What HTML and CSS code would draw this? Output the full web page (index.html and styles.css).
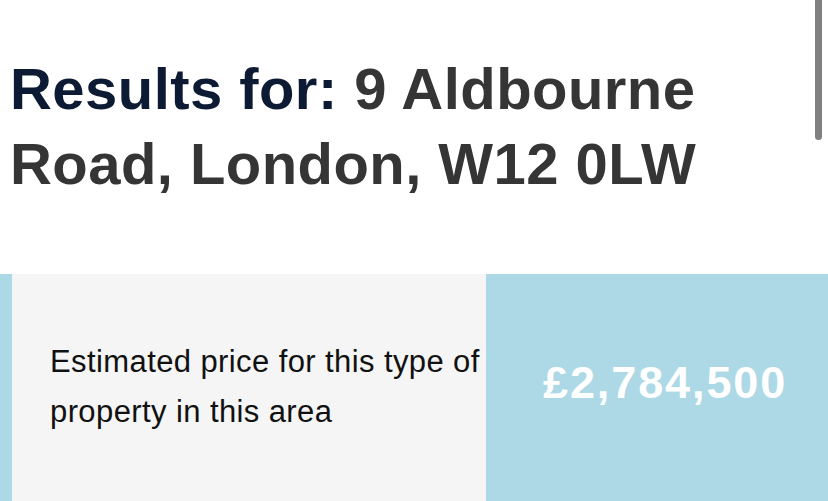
FILE: index.html
```html
<!DOCTYPE html>
<html lang="en">
<head>
<meta charset="utf-8">
<title>Results</title>
<link rel="stylesheet" href="styles.css">
</head>
<body>
<div class="scrollbar"></div>
<main class="page">
  <h1 class="title"><span class="label">Results for: </span><span class="address">9 Aldbourne</span> <span class="address">Road, London, W12 0LW</span></h1>
  <section class="band">
    <div class="desc">
      <p class="desc-text">Estimated price for this type of property in this area</p>
    </div>
    <div class="price">
      <span class="price-value">£2,784,500</span>
    </div>
  </section>
</main>
</body>
</html>
```
FILE: styles.css
```css
html, body {
  margin: 0;
  padding: 0;
  background: #ffffff;
  overflow: hidden;
}
body {
  font-family: "Liberation Sans", Arial, Helvetica, sans-serif;
  width: 828px;
  height: 501px;
  position: relative;
}
.page {
  display: flex;
  flex-direction: column;
}
.title {
  margin: 51px 0 0 10px;
  font-size: 58px;
  line-height: 75px;
  letter-spacing: 0.45px;
  font-weight: 700;
  color: #353535;
  width: 760px;
}
.label {
  color: #0c1a33;
}
.address {
  color: #353535;
}
.band {
  margin-top: 73px;
  height: 227px;
  background: #add8e5;
  padding-left: 12px;
  display: grid;
  grid-template-columns: 474px 1fr;
}
.desc {
  background: #f5f5f5;
  display: flex;
  align-items: center;
  padding-left: 38px;
  padding-bottom: 2px;
}
.desc-text {
  margin: 0;
  font-size: 31px;
  line-height: 49.5px;
  letter-spacing: 0.4px;
  color: #111111;
}
.price {
  display: flex;
  align-items: center;
  padding-left: 57px;
  padding-bottom: 9px;
}
.price-value {
  font-size: 45px;
  font-weight: 700;
  letter-spacing: 1.9px;
  color: #ffffff;
}
.scrollbar {
  position: absolute;
  top: 0;
  left: 815px;
  width: 7px;
  height: 140px;
  background: #808080;
  border-radius: 0 0 4px 4px;
}
```
